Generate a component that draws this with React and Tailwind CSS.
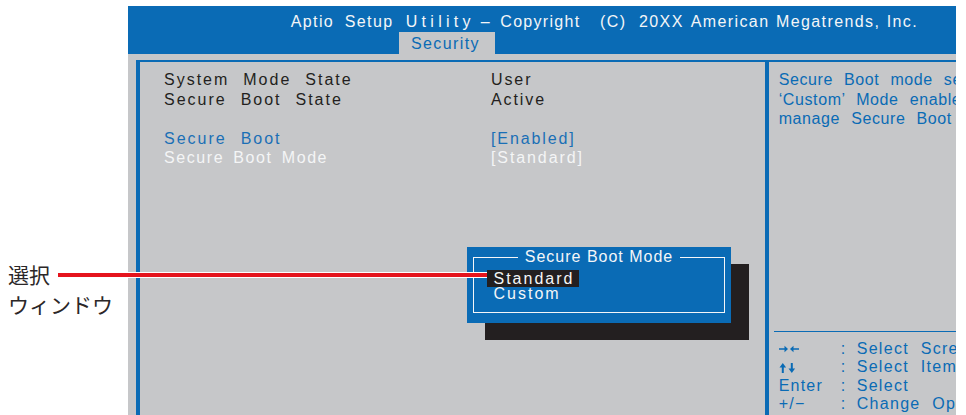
const BLUE = 'bg-[#0a6bb5]';

function ArrowsLR() {
    return (
        <svg width="20" height="8" viewBox="0 0 20 8" className="inline-block">
            <path d="M0 3.2h5.5v-2.4l3.5 3.2-3.5 3.2v-2.4H0z" fill="#0a6bb5" />
            <path d="M20 3.2h-5.5v-2.4L11 4l3.5 3.2v-2.4H20z" fill="#0a6bb5" />
        </svg>
    );
}

function ArrowsUD() {
    return (
        <svg width="20" height="10" viewBox="0 0 20 10" className="inline-block">
            <path d="M2.8 10V4.5H0.5L3.8 0l3.3 4.5H4.8V10z" fill="#0a6bb5" />
            <path d="M11.8 0v5.5H9.5l3.3 4.5 3.3-4.5h-2.3V0z" fill="#0a6bb5" />
        </svg>
    );
}

function HeaderTitle() {
    const words = [
        ['Aptio', 'w-[54px]', 'tracking-[1.4px]'],
        ['Setup', 'w-[61px]', 'tracking-[1.4px]'],
        ['Utility', 'w-[75px]', 'tracking-[4.3px]'],
        ['–', 'w-[19.6px]', 'tracking-[1.4px]'],
        ['Copyright', 'w-[99.7px]', 'tracking-[1.3px]'],
        ['(C)', 'w-[39px]', 'tracking-[1.4px]'],
        ['20XX', 'w-[51.7px]', 'tracking-[1.4px]'],
        ['American', 'w-[85.3px]', 'tracking-[1.4px]'],
        ['Megatrends,', 'w-[110.7px]', 'tracking-[1.4px]'],
        ['Inc.', 'w-[40px]', 'tracking-[1.4px]'],
    ];
    return (
        <div className="flex pl-[162.7px] h-[20px] leading-[20px] text-[16px] text-[#f4f6f8]">
            {words.map(([w, width, tr]) => (
                <span key={w} className={`${width} ${tr} shrink-0 whitespace-nowrap`}>
                    {w}
                </span>
            ))}
        </div>
    );
}

function Row({ label, value, color, tight }) {
    return (
        <div className={`flex h-[19.6px] leading-[19.6px] ${color}`}>
            <span
                className={`w-[327px] shrink-0 ${tight ? 'tracking-[1.6px] [word-spacing:3px]' : 'tracking-[2px] [word-spacing:7.5px]'}`}
            >
                {label}
            </span>
            <span className="tracking-[1.9px]">{value}</span>
        </div>
    );
}

function Popup() {
    return (
        <div className="absolute left-[327px] top-[185px] w-[264px] h-[76px]">
            <div className="absolute left-[18px] top-[17px] w-[264px] h-[76px] bg-[#231f20]" />
            <div className={`absolute inset-0 ${BLUE}`}>
                <div className="absolute left-[6px] right-[6px] top-[10px] bottom-[10px] border-[1.5px] border-[#f4f6f8]">
                    <div className="absolute -top-[10px] left-0 right-0 flex justify-center">
                        <span className={`${BLUE} px-[7px] text-[16px] leading-[18px] tracking-[1px] text-[#f4f6f8]`}>
                            Secure Boot Mode
                        </span>
                    </div>
                    <div className="pt-[8.5px] pl-[12.5px] text-[16px] tracking-[2px] text-[#f4f6f8]">
                        <div className="h-[18.4px]">
                            <span className="inline-block bg-[#231f20] leading-[17px] h-[17px] pl-[7px] pr-[5px]">Standard</span>
                        </div>
                        <div className="h-[18.4px] leading-[17px] pl-[7px]">Custom</div>
                    </div>
                </div>
            </div>
        </div>
    );
}

function KeyRow({ k, text }) {
    return (
        <div className="flex h-[18.2px] leading-[18.2px] items-center">
            <span className="w-[62px] shrink-0 tracking-[1.2px] flex items-center">{k}</span>
            <span className="w-[16px] shrink-0">:</span>
            <span className="tracking-[1.3px] [word-spacing:6px] whitespace-nowrap">{text}</span>
        </div>
    );
}

export default function App() {
    return (
        <div className="relative w-[966px] h-[415px] bg-white overflow-hidden flex font-['Liberation_Sans',Arial,sans-serif]">
            <div className="w-[128px] shrink-0 pt-[259px] pl-[8px] text-[21px] leading-[30px] text-[#2b2728] font-['Noto_Sans_CJK_JP',sans-serif]">
                <div>選択</div>
                <div>ウィンドウ</div>
            </div>

            <div className="w-[828px] shrink-0 pt-[6px] flex flex-col">
                <div className={`${BLUE} h-[48px] pt-[6px] flex flex-col`}>
                    <HeaderTitle />
                    <div className="pl-[271px]">
                        <div className="w-[96px] h-[22px] bg-[#c6c7c9] pl-[12px] pt-[2px] leading-[20px] text-[16px] tracking-[1.4px] text-[#0a6bb5]">
                            Security
                        </div>
                    </div>
                </div>
                <div className="flex-1 bg-[#c6c7c9] pl-[8px] pt-[6px] overflow-hidden">
                    <div className="h-full flex border-l-[4px] border-t-[2px] border-[#0a6bb5] text-[16px]">
                        <div className="relative w-[629px] shrink-0 border-r-[4px] border-[#0a6bb5] pt-[8px] pl-[24px]">
                            <Row label="System Mode State" value="User" color="text-[#231f20]" />
                            <Row label="Secure Boot State" value="Active" color="text-[#231f20]" />
                            <div className="h-[19.6px]" />
                            <Row label="Secure Boot" value="[Enabled]" color="text-[#1a6fb6]" />
                            <Row label="Secure Boot Mode" value="[Standard]" color="text-[#f4f5f6]" tight />
                            <Popup />
                        </div>
                        <div className="flex-1 min-w-0 overflow-hidden pt-[8px] text-[#0a6bb5]">
                            <div className="pl-[9.7px] whitespace-nowrap tracking-[0.6px] [word-spacing:6px] leading-[19.6px]">
                                <div>Secure Boot mode selector.</div>
                                <div>‘Custom’ Mode enables users to</div>
                                <div>manage Secure Boot keys.</div>
                            </div>
                            <div className="mt-[202px] ml-[5px] border-t border-[#0a6bb5] pt-[8.5px] pl-[4.7px]">
                                <KeyRow k={<ArrowsLR />} text="Select Screen" />
                                <KeyRow k={<ArrowsUD />} text="Select  Item" />
                                <KeyRow k="Enter" text="Select" />
                                <KeyRow k="+/−" text="Change Opt." />
                                <KeyRow k="F1" text="General Help" />
                            </div>
                        </div>
                    </div>
                </div>
            </div>

            <div className="absolute left-[58px] top-[271.5px] w-[429px] h-[6px] border-y border-white bg-[#e5141d]" />
        </div>
    );
}
